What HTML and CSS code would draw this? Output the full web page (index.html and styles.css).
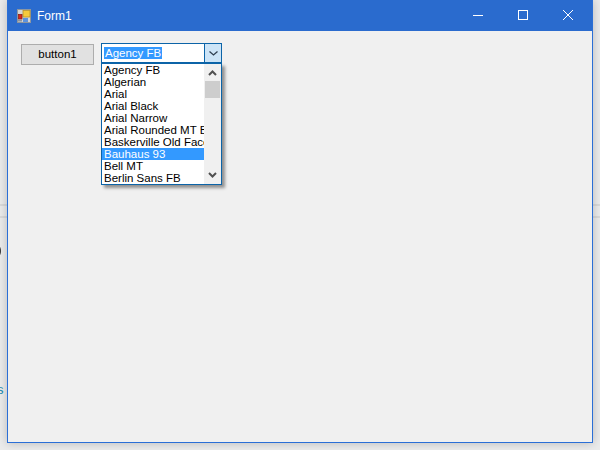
FILE: index.html
```html
<!DOCTYPE html>
<html lang="en">
<head>
<meta charset="utf-8">
<title>Form1</title>
<link rel="stylesheet" href="styles.css">
</head>
<body>
<div class="desktop">
  <div class="rule rule-a"></div>
  <div class="rule rule-b"></div>
  <span class="peek peek-paren">)</span>
  <span class="peek peek-link">s</span>
  <div class="window">
    <header class="titlebar">
      <svg class="app-icon" width="14" height="14" viewBox="0 0 14 14">
        <rect x="0.5" y="0.5" width="13" height="13" fill="#d4d4d4" stroke="#8d96a0"/>
        <rect x="6" y="1.5" width="7" height="6.5" fill="#f6c93c" stroke="#b8922a" stroke-width="0.8"/>
        <rect x="1.5" y="5.5" width="3.5" height="4.5" fill="#d8281c" stroke="#8d2018" stroke-width="0.8"/>
        <rect x="6" y="9" width="5" height="4" fill="#5a92e0"/>
        <path d="M1 11.5H5M1 13H5" stroke="#8a949e"/>
      </svg>
      <span class="title">Form1</span>
      <div class="controls">
        <button class="ctl"><svg width="10" height="10" viewBox="0 0 10 10"><path d="M0 5.5H10" stroke="#fff"/></svg></button>
        <button class="ctl"><svg width="10" height="10" viewBox="0 0 10 10"><rect x="0.5" y="0.5" width="9" height="9" fill="none" stroke="#fff"/></svg></button>
        <button class="ctl"><svg width="10" height="10" viewBox="0 0 10 10"><path d="M0 0L10 10M10 0L0 10" stroke="#fff"/></svg></button>
      </div>
    </header>
    <main class="client">
      <button class="btn">button1</button>
      <div class="combo">
        <div class="combo-field"><span class="combo-sel">Agency FB</span></div>
        <div class="combo-arrow"><svg width="9" height="5" viewBox="0 0 9 5"><path d="M0.5 0.5L4.5 4L8.5 0.5" fill="none" stroke="#2f3f50" stroke-width="1.3"/></svg></div>
      </div>
      <div class="dropdown">
        <ul class="list">
          <li>Agency FB</li>
          <li>Algerian</li>
          <li>Arial</li>
          <li>Arial Black</li>
          <li>Arial Narrow</li>
          <li>Arial Rounded MT Bold</li>
          <li>Baskerville Old Face</li>
          <li class="hot">Bauhaus 93</li>
          <li>Bell MT</li>
          <li>Berlin Sans FB</li>
        </ul>
        <div class="scroll">
          <svg class="sc-arrow" width="9" height="6" viewBox="0 0 9 6"><path d="M1 5L4.5 1.5L8 5" fill="none" stroke="#505050" stroke-width="2"/></svg>
          <div class="thumb"></div>
          <svg class="sc-arrow sc-down" width="9" height="6" viewBox="0 0 9 6"><path d="M1 1L4.5 4.5L8 1" fill="none" stroke="#505050" stroke-width="2"/></svg>
        </div>
      </div>
    </main>
  </div>
</div>
</body>
</html>
```
FILE: styles.css
```css
html, body { margin: 0; padding: 0; }
body { width: 600px; height: 450px; overflow: hidden; font-family: "Liberation Sans", Arial, sans-serif; }
.desktop { position: relative; width: 600px; height: 450px; background: #ebebeb; overflow: hidden; }
.rule { position: absolute; left: 0; width: 600px; height: 2px; background: #dadada; }
.rule-a { top: 204px; }
.rule-b { top: 216px; }
.peek { position: absolute; }
.peek-paren { left: -3px; top: 242px; color: #000; font-size: 14px; line-height: 16px; filter: grayscale(1); }
.peek-link { left: -3px; top: 383px; color: #1a8ab0; font-size: 13px; line-height: 14px; }
.window { position: absolute; left: 7px; top: 0; width: 584px; height: 442px; box-sizing: content-box; display: flex; flex-direction: column; border: 1px solid #2b6fd6; border-top: 0; background: #f0f0f0; box-shadow: 0 0 9px rgba(0,0,0,.22); }
.titlebar { height: 31px; flex: none; display: flex; align-items: center; background: #2a6bce; color: #fff; }
.app-icon { margin-left: 9px; flex: none; }
.title { margin-left: 6px; font-size: 12px; }
.controls { margin-left: auto; margin-right: 2px; align-self: flex-start; display: flex; }
.ctl { width: 45px; height: 30px; padding: 0; border: 0; background: none; display: flex; align-items: center; justify-content: center; }
.client { position: relative; flex: 1; padding: 13px; display: flex; align-items: flex-start; gap: 7px; }
.btn { width: 73px; height: 21px; padding: 0 0 2px; border: 1px solid #adadad; background: #e1e1e1; color: #000; font: 11.5px "Liberation Sans", Arial, sans-serif; }
.combo { width: 121px; height: 20px; margin-top: -1px; box-sizing: border-box; border: 1px solid #0c64a8; background: #fff; display: flex; }
.combo-field { flex: 1; padding: 3px 2px 0; font-size: 11.5px; line-height: 12px; }
.combo-sel { display: inline-block; background: #3399ff; color: #fff; padding: 0 1px; height: 12px; }
.combo-arrow { width: 16px; border-left: 1px solid #0c64a8; background: #cce4f7; display: flex; align-items: center; justify-content: center; }
.dropdown { position: absolute; left: 93px; top: 32px; width: 119px; height: 120px; display: flex; border: 1px solid #0c64a8; background: #fff; box-shadow: 3px 3px 3px rgba(0,0,0,.4); }
.list { flex: 1; min-width: 0; margin: 0; padding: 0; list-style: none; font-size: 11.5px; line-height: 12px; overflow: hidden; }
.list li { padding-left: 2px; height: 12px; white-space: nowrap; overflow: hidden; }
.list li.hot { background: #3399ff; color: #fff; }
.scroll { width: 17px; flex: none; display: flex; flex-direction: column; align-items: center; background: #f0f0f0; position: relative; }
.sc-arrow { margin-top: 6px; flex: none; }
.thumb { width: 15px; height: 17px; background: #cdcdcd; margin-top: 5px; }
.sc-down { margin-top: auto; margin-bottom: 6px; }
```
